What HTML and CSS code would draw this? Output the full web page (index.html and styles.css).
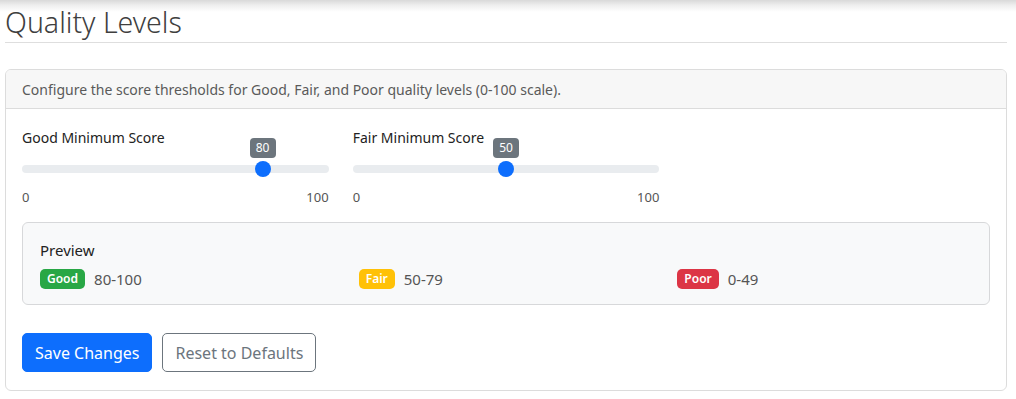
FILE: index.html
```html
<!DOCTYPE html>
<html lang="en">
<head>
<meta charset="utf-8">
<title>Quality Levels</title>
<link rel="stylesheet" href="styles.css">
</head>
<body>
<div class="topshade"></div>
<main class="page">
  <h3 class="page-title">Quality Levels</h3>
  <section class="card">
    <div class="card-header">Configure the score thresholds for Good, Fair, and Poor quality levels (0-100 scale).</div>
    <div class="card-body">
      <div class="row">
        <div class="col">
          <div class="field-label">Good Minimum Score</div>
          <div class="slider">
            <div class="track"></div>
            <div class="thumb" style="left: calc(8px + (100% - 16px) * 0.80)">
              <span class="tip">80</span>
            </div>
          </div>
          <div class="range-ends"><span>0</span><span>100</span></div>
        </div>
        <div class="col">
          <div class="field-label">Fair Minimum Score</div>
          <div class="slider">
            <div class="track"></div>
            <div class="thumb" style="left: calc(8px + (100% - 16px) * 0.50)">
              <span class="tip">50</span>
            </div>
          </div>
          <div class="range-ends"><span>0</span><span>100</span></div>
        </div>
        <div class="col"></div>
      </div>

      <div class="preview">
        <div class="preview-title">Preview</div>
        <div class="row">
          <div class="col"><span class="badge good">Good</span><span class="range">80-100</span></div>
          <div class="col"><span class="badge fair">Fair</span><span class="range">50-79</span></div>
          <div class="col"><span class="badge poor">Poor</span><span class="range">0-49</span></div>
        </div>
      </div>

      <div class="actions">
        <button class="btn btn-primary">Save Changes</button>
        <button class="btn btn-outline">Reset to Defaults</button>
      </div>
    </div>
  </section>
</main>
</body>
</html>
```

FILE: styles.css
```css
* { box-sizing: border-box; }

html, body {
  margin: 0;
  padding: 0;
  background: #fff;
}

body {
  font-family: "Noto Sans", "Open Sans", sans-serif;
  color: #212529;
  font-size: 15px;
}

.topshade {
  height: 12px;
  background: linear-gradient(to bottom, #d9d9d9 0%, #efefef 45%, #ffffff 100%);
}

.page {
  padding: 0 9px 0 5px;
}

.page-title {
  margin: -7px 0 0 0;
  padding: 0 0 3px 0;
  font-size: 28.5px;
  font-weight: 300;
  line-height: 34px;
  color: #3f3f3f;
  border-bottom: 1px solid #dedede;
}

.card {
  margin-top: 26px;
  border: 1px solid #dcdcdc;
  border-radius: 6px;
  background: #fff;
  overflow: hidden;
}

.card-header {
  height: 39px;
  padding: 0 16px;
  display: flex;
  align-items: center;
  background: #f7f7f7;
  border-bottom: 1px solid #dcdcdc;
  font-size: 14px;
  color: #5a5a5a;
}

.card-body {
  padding: 16px 16px 18px 16px;
}

.row {
  display: flex;
  margin: 0 -12px;
}

.col {
  flex: 1 1 0;
  padding: 0 12px;
  min-width: 0;
}

.field-label {
  font-size: 14px;
  line-height: 26px;
  color: #222;
}

.slider {
  position: relative;
  height: 26px;
}

.track {
  position: absolute;
  left: 0;
  right: 0;
  top: 14px;
  height: 8px;
  border-radius: 4px;
  background: #e9ecef;
}

.thumb {
  position: absolute;
  top: 10px;
  width: 16px;
  height: 16px;
  margin-left: -8px;
  border-radius: 50%;
  background: #0d6efd;
}

.tip {
  position: absolute;
  left: 50%;
  bottom: 19px;
  transform: translateX(-50%);
  width: 26px;
  height: 20px;
  border-radius: 4px;
  background: #6c757d;
  color: #fff;
  font-size: 12px;
  line-height: 20px;
  text-align: center;
}

.range-ends {
  display: flex;
  justify-content: space-between;
  margin-top: 12px;
  font-size: 13px;
  line-height: 16px;
  color: #555;
}

.preview {
  margin-top: 17px;
  padding: 16px 17px 14px 17px;
  background: #f8f9fa;
  border: 1px solid #d7d8da;
  border-radius: 6px;
}

.preview-title {
  font-size: 15px;
  line-height: 22px;
  color: #222;
}

.preview .row {
  margin-top: 7px;
  height: 22px;
  align-items: center;
}

.preview .col {
  display: flex;
  align-items: center;
}

.badge {
  display: inline-block;
  padding: 0 7px;
  height: 20px;
  line-height: 20px;
  border-radius: 5px;
  font-size: 12px;
  font-weight: 600;
  color: #fff;
}

.badge.good { background: #28a745; }
.badge.fair { background: #ffc107; }
.badge.poor { background: #dc3545; }

.range {
  font-size: 15px;
  color: #555;
  margin-left: 9px;
}

.actions {
  display: flex;
  gap: 10px;
  margin-top: 28px;
}

.btn {
  font-family: inherit;
  height: 39px;
  padding: 0 12px;
  border-radius: 5px;
  font-size: 16px;
  cursor: pointer;
}

.btn-primary {
  background: #0d6efd;
  border: 1px solid #0d6efd;
  color: #fff;
}

.btn-outline {
  background: #fff;
  border: 1px solid #6c757d;
  color: #6c757d;
}
```
